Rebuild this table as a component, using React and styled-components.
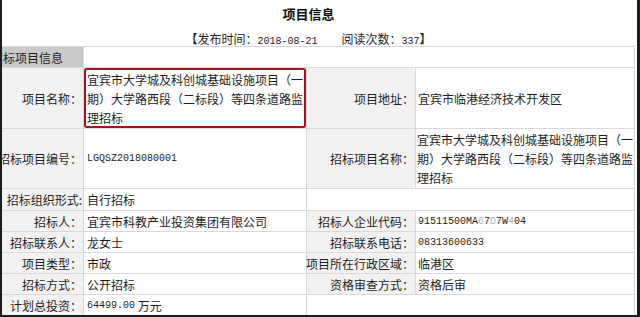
import React from 'react';
import styled, { createGlobalStyle } from 'styled-components';

const GlobalStyle = createGlobalStyle`
  html, body {
    margin: 0;
    padding: 0;
    background: #fff;
    overflow: hidden;
  }
`;

const Frame = styled.div`
  box-sizing: border-box;
  width: 640px;
  height: 317px;
  border-style: solid;
  border-color: #1c1c1c;
  border-width: 0 3px 2px 2px;
  overflow: hidden;
  background: #fff;
  font-family: "Noto Sans CJK SC", "Noto Sans", sans-serif;
  font-size: 12px;
  color: #1e1e1e;
`;

const Head = styled.div`
  padding-right: 22px;
  text-align: center;
`;

const Title = styled.h1`
  margin: 0;
  height: 28px;
  line-height: 28px;
  font-size: 13px;
  font-weight: bold;
  color: #111;
`;

const Meta = styled.div`
  margin-top: 4px;
  height: 14px;
  line-height: 14px;
  white-space: nowrap;
`;

const Gap = styled.span`
  display: inline-block;
  width: 24px;
`;

const Code = styled.span`
  font-family: "Liberation Mono", "DejaVu Sans Mono", monospace;
  font-size: 10px;
  color: ${(p) => (p.$faint ? '#b0b0b0' : 'inherit')};
`;

const Sheet = styled.div`
  display: grid;
  width: max-content;
  grid-template-columns: 81px 222px 108px 218px;
  grid-template-rows: 20px 60px 59px 21px repeat(5, 20px);
  gap: 1px;
  background: #d9d9d9;
  border-top: 1px solid #d9d9d9;
  border-right: 1px solid #d9d9d9;
`;

const Section = styled.div`
  display: flex;
  align-items: center;
  justify-content: flex-end;
  padding-right: 20px;
  background: #cacaca;
  white-space: nowrap;
`;

const Label = styled.div`
  display: flex;
  align-items: center;
  justify-content: flex-end;
  padding-right: 1px;
  background: #f2f2f2;
  white-space: nowrap;
`;

const Value = styled.div`
  display: flex;
  align-items: center;
  min-width: 0;
  padding-left: ${(p) => (p.$pad ? p.$pad : 3)}px;
  background: #fff;
  line-height: 19px;
  grid-column: ${(p) => (p.$span ? `span ${p.$span}` : 'auto')};
`;

const Marked = styled(Value)`
  box-sizing: border-box;
  padding-left: 1px;
  border: 2px solid #a3141c;
  border-radius: 3px;
`;

const projectName = '宜宾市大学城及科创城基础设施项目（一期）大学路西段（二标段）等四条道路监理招标';

export default function App() {
  return (
    <>
      <GlobalStyle />
      <Frame>
        <Head>
          <Title>项目信息</Title>
          <Meta>
            【发布时间：<Code>2018-08-21</Code>
            <Gap />
            阅读次数：<Code>337</Code>】
          </Meta>
        </Head>
        <Sheet>
          <Section>招标项目信息</Section>
          <Value $span={3} />

          <Label>项目名称：</Label>
          <Marked>{projectName}</Marked>
          <Label>项目地址：</Label>
          <Value $pad={2}>宜宾市临港经济技术开发区</Value>

          <Label>招标项目编号：</Label>
          <Value><Code>LGQSZ2018080001</Code></Value>
          <Label>招标项目名称：</Label>
          <Value $pad={1}>{projectName}</Value>

          <Label>招标组织形式:</Label>
          <Value>自行招标</Value>
          <Value $span={2} />

          <Label>招标人：</Label>
          <Value>宜宾市科教产业投资集团有限公司</Value>
          <Label>招标人企业代码：</Label>
          <Value $pad={2}>
            <Code>91511500MA<Code $faint>6</Code>7<Code $faint>D</Code>7W<Code $faint>4</Code>04</Code>
          </Value>

          <Label>招标联系人：</Label>
          <Value>龙女士</Value>
          <Label>招标联系电话：</Label>
          <Value $pad={2}><Code>08313600633</Code></Value>

          <Label>项目类型：</Label>
          <Value>市政</Value>
          <Label>项目所在行政区域：</Label>
          <Value $pad={2}>临港区</Value>

          <Label>招标方式：</Label>
          <Value>公开招标</Value>
          <Label>资格审查方式：</Label>
          <Value $pad={2}>资格后审</Value>

          <Label>计划总投资：</Label>
          <Value><Code>64499.00</Code>&nbsp;万元</Value>
          <Value $span={2} />
        </Sheet>
      </Frame>
    </>
  );
}
